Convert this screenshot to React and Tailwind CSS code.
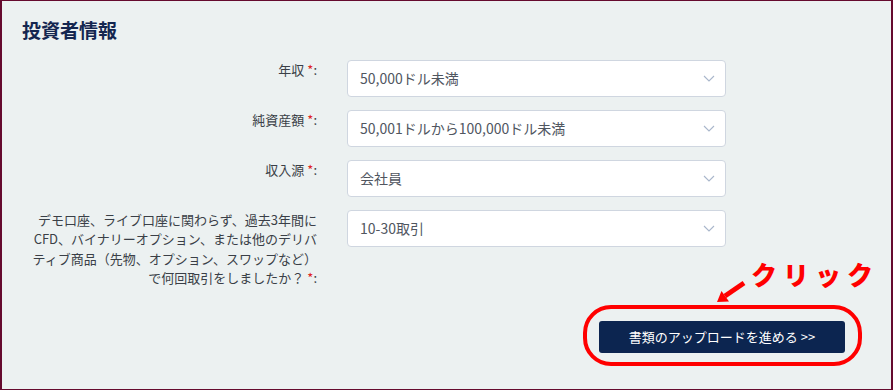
import React from 'react';

const rows = [
  { label: ['年収'], value: '50,000ドル未満' },
  { label: ['純資産額'], value: '50,001ドルから100,000ドル未満' },
  { label: ['収入源'], value: '会社員' },
  {
    label: [
      'デモ口座、ライブ口座に関わらず、過去3年間に',
      'CFD、バイナリーオプション、または他のデリバ',
      'ティブ商品（先物、オプション、スワップなど）',
      'で何回取引をしましたか？',
    ],
    value: '10-30取引',
  },
];

const Chevron = () => (
  <svg width="12" height="7" viewBox="0 0 12 7" fill="none">
    <path d="M1 1l5 5 5-5" stroke="#a9b6cb" strokeWidth="1.1" />
  </svg>
);

const SelectBox = ({ value }) => (
  <div className="h-[37px] w-[379px] bg-white border border-[#cfd6e0] rounded-[4px] flex items-center justify-between pl-[12px] pr-[10px]">
    <span className="text-[14px] text-[#50565f]">{value}</span>
    <Chevron />
  </div>
);

export default function App() {
  return (
    <div
      className="relative w-[893px] h-[390px] bg-[#ecf1f1] border-t border-l-2 border-r-2 border-b border-[#650a2e] overflow-hidden"
      style={{ fontFamily: '"Noto Sans CJK JP", "Noto Sans", sans-serif' }}
    >
      <div className="pl-[20px] pt-[15px]">
        <h2 className="text-[19px] leading-[27px] font-bold text-[#142650]">投資者情報</h2>

        <div className="mt-[17px] flex flex-col gap-[13px]">
          {rows.map((row, i) => (
            <div key={i} className="flex items-start gap-[30px]">
              <div className="w-[295px] text-right text-[13px] leading-[19.3px] text-[#3a3f47]">
                {row.label.map((line, j) => (
                  <div key={j}>
                    {line}
                    {j === row.label.length - 1 && (
                      <>
                        {' '}
                        <span className="text-[#e02424]">*</span>:
                      </>
                    )}
                  </div>
                ))}
              </div>
              <SelectBox value={row.value} />
            </div>
          ))}
        </div>
      </div>

      {/* button with red annotation */}
      <div className="flex justify-end pr-[29px] mt-[18px]">
        <div className="border-4 border-[#ff0000] rounded-[28px] pl-[12px] pr-[13px] pt-[12px] pb-[9px]">
          <button className="w-[246px] h-[32px] bg-[#0c2550] rounded-[3px] text-white text-[13px] font-normal">
            書類のアップロードを進める &gt;&gt;
          </button>
        </div>
      </div>

      {/* annotation label and arrow */}
      <div className="absolute left-[749px] top-[258px] text-[26px] leading-[30px] font-black text-[#ff0000] tracking-[6px]">
        クリック
      </div>
      <svg className="absolute left-[712px] top-[278px]" width="34" height="26" viewBox="0 0 34 26">
        <line x1="30" y1="4" x2="11" y2="17" stroke="#ff0000" strokeWidth="5" />
        <polygon points="3,23 15,22.5 7.5,12" fill="#ff0000" />
      </svg>
    </div>
  );
}
